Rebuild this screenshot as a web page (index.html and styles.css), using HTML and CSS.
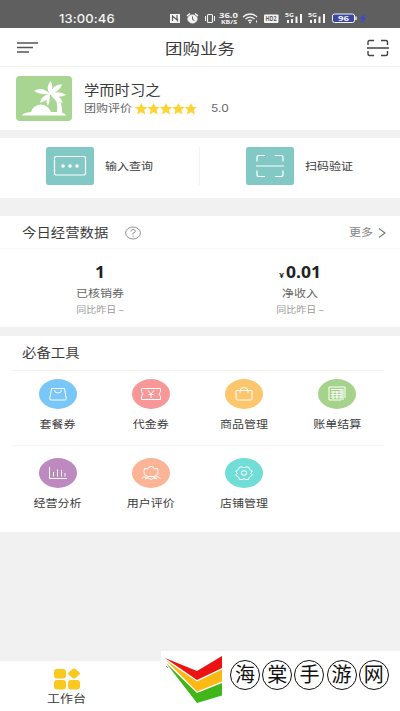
FILE: index.html
```html
<!DOCTYPE html>
<html lang="zh-CN">
<head>
<meta charset="utf-8">
<title>团购业务</title>
<link rel="stylesheet" href="styles.css">
</head>
<body>
<div class="status">
  <span class="clock">13:00:46</span>
  <svg class="status-icons" width="202" height="20" viewBox="168 8 202 20" fill="none" stroke="#f4f4f4">
    <path d="M170 14h10v9h-10z" fill="#f4f4f4" stroke="none"/>
    <path d="M172.500 21v-5l4.500 4v-5M177.500 21.500v-3" stroke="#5f5f5f" stroke-width="1.200"/>
    <ellipse cx="192.500" cy="19" rx="4.600" ry="4" fill="#f4f4f4"/>
    <path d="M187 16l3-2.500M198 16l-3-2.500" stroke-width="1.600"/>
    <path d="M192.500 16.500v3l2 1" stroke="#5f5f5f"/>
    <rect x="207.500" y="14.500" width="5" height="8" rx="1" stroke-width="1.200"/>
    <path d="M205.500 16v5M214.500 16v5"/>
    <path d="M243 17c4-4 10-4 14 0M245.500 19c3-2.500 6-2.500 9 0M248 21c1.500-1.200 2.500-1.200 4 0" stroke-width="1.300"/>
    <circle cx="250" cy="22.500" r="1" fill="#f4f4f4" stroke="none"/>
    <path d="M256.500 20.500v2"/>
    <rect x="264" y="14.500" width="14.500" height="8.500" rx="1" fill="#f4f4f4" stroke="none"/>
    <path d="M288 23v-3M292 23v-4M296.500 23v-6.500M301 23v-9M311 23v-3M315 23v-4M319.500 23v-6.500M324 23v-9" stroke-width="2"/>
    <rect x="332.500" y="14" width="22" height="8.500" rx="2" fill="#3948a5"/>
    <path d="M356 16.500v3.500" stroke-width="1.400"/>
    <path d="M364.500 14l-5 5h3l-1.500 4 5.500-5.500h-3z" fill="#3547d8" stroke="none"/>
    <g class="tiny">
      <text x="219" y="17.500" textLength="19" lengthAdjust="spacingAndGlyphs">36.0</text>
      <text x="221" y="24" textLength="16" lengthAdjust="spacingAndGlyphs" class="unit">KB/S</text>
      <text x="285" y="17" textLength="9" lengthAdjust="spacingAndGlyphs" class="sm">5G</text>
      <text x="308" y="17" textLength="9" lengthAdjust="spacingAndGlyphs" class="sm">5G</text>
      <text x="338" y="21" textLength="11" lengthAdjust="spacingAndGlyphs">96</text>
      <text x="265.500" y="21.200" textLength="11" lengthAdjust="spacingAndGlyphs" class="dark">HD2</text>
    </g>
  </svg>
</div>
<header class="header">
  <svg width="22" height="13" viewBox="0 0 22 13" stroke="#555" stroke-width="1.500"><path d="M0 2h21M0 6.500h16M0 11h12"/></svg>
  <h1 class="t">团购业务</h1>
  <svg width="22" height="18" viewBox="0 0 22 18" fill="none" stroke="#444" stroke-width="1.400"><path d="M1 6V3q0-1.500 1.500-1.500H7M14 1.500h5q1.500 0 1.500 1.500v3M1 12v3q0 1.500 1.500 1.500H7M14 16.500h5q1.500 0 1.500-1.500v-3M0 9h22"/></svg>
</header>
<section class="shop">
  <svg class="logo" width="56" height="45" viewBox="0 0 56 45"><rect width="56" height="45" rx="4" fill="#a9d593"/><g fill="#fff"><path d="M6 39.500q1-3 9-3.500 2-7 10-7.500 6 .5 9 5.500l1 2h8q6 .5 7 3.500z"/><path d="M34 17q9 7 7 20h5q1-14-11-21z"/><path d="M34 18q-5-6 .5-13 4 6-.5 13zM34 18q-9 1-16-3 8-5 16 3zM34 18q-3 8-10 8.500 1-7 10-8.500zM34 18q0 7-2 12-4-6 2-12zM34 18q2-9 12-10-2 8-12 10zM34 18q10-4 16 1-8 4-16-1zM34 18q10 0 13 9-8-1-13-9z"/></g></svg>
  <div class="shop-info">
    <div class="shop-name t">学而时习之</div>
    <div class="rating"><span class="t">团购评价</span>
      <svg width="62" height="12" viewBox="0 0 62 12" fill="#fdd338"><defs><path id="star" d="M6.200 0l1.900 3.700 4.300.4-3.200 3 1 4.400-4-2.200-4 2.200 1-4.400L0 4.100l4.300-.4z"/></defs><use href="#star"/><use href="#star" x="12.400"/><use href="#star" x="24.800"/><use href="#star" x="37.200"/><use href="#star" x="49.600"/></svg>
      <span class="score t">5.0</span></div>
  </div>
</section>
<section class="verify">
  <div class="verify-item">
    <svg width="48" height="38" viewBox="0 0 48 38"><rect width="48" height="38" rx="2.500" fill="#82c9c6"/><rect x="8.500" y="9.500" width="31" height="18.500" rx="1.500" fill="none" stroke="#fff" stroke-width="1.200"/><g fill="#fff"><circle cx="17" cy="19" r="1.800"/><circle cx="24" cy="19" r="1.800"/><circle cx="31" cy="19" r="1.800"/></g></svg>
    <span class="t">输入查询</span>
  </div>
  <div class="verify-item">
    <svg width="48" height="38" viewBox="0 0 48 38"><rect width="48" height="38" rx="2.500" fill="#82c9c6"/><path d="M11 14.500v-4q0-2 2-2h6M29 8.500h6q2 0 2 2v4M11 23.500v4q0 2 2 2h6M29 29.500h6q2 0 2-2v-4M10 19h28" fill="none" stroke="#fff" stroke-width="1.200"/></svg>
    <span class="t">扫码验证</span>
  </div>
</section>
<section class="data">
  <div class="data-head">
    <h2 class="t">今日经营数据</h2>
    <svg width="16" height="14" viewBox="0 0 16 14" fill="none" stroke="#858585" stroke-width=".9"><ellipse cx="8" cy="7" rx="7.400" ry="6"/><path d="M5.800 5.500q0-2 2.300-2t2.300 1.700Q10.400 6.500 8 7.200v1.300M8 9.700v1"/></svg>
    <span class="more t">更多</span>
    <svg width="8" height="12" viewBox="0 0 8 12" fill="none" stroke="#777" stroke-width="1.100"><path d="M1 1.500l6 4.500-6 4.500"/></svg>
  </div>
  <div class="stats">
    <div class="stat"><b class="t">1</b><span class="label t">已核销券</span><span class="compare t">同比昨日 –</span></div>
    <div class="stat"><b class="t"><small>¥</small>0.01</b><span class="label t">净收入</span><span class="compare t">同比昨日 –</span></div>
  </div>
</section>
<section class="tools">
  <h2 class="t">必备工具</h2>
  <div class="tool-row">
    <div class="tool"><svg viewBox="0 0 38 30"><ellipse cx="19" cy="15" rx="19" ry="15" fill="#78c7f8"/><path d="M12.500 9.500h13l1.700 10q.2 1.500-1.200 1.500H12q-1.400 0-1.200-1.500zM15.500 11q0 3 3.500 3t3.500-3"/></svg><span class="t">套餐券</span></div>
    <div class="tool"><svg viewBox="0 0 38 30"><ellipse cx="19" cy="15" rx="19" ry="15" fill="#f89798"/><path d="M9.500 9.500h19v3q-3 2.500 0 5v3h-19v-3q3-2.500 0-5z"/><path d="M16 11.500l3 3.500 3-3.500M19 15v4M16.500 15.500h5" stroke-width="1.300"/></svg><span class="t">代金券</span></div>
    <div class="tool"><svg viewBox="0 0 38 30"><ellipse cx="19" cy="15" rx="19" ry="15" fill="#fcc66c"/><path d="M11 11.500h16v8q0 1.500-1.500 1.500h-13q-1.500 0-1.500-1.500zM15 14v-2q0-3.500 4-3.500t4 3.500v2"/></svg><span class="t">商品管理</span></div>
    <div class="tool"><svg viewBox="0 0 38 30"><ellipse cx="19" cy="15" rx="19" ry="15" fill="#a5d38c"/><path d="M11 21V8h16v11M11 21h12V11M13 10.500h11.500M13 13h11.500M13 15.500h11.500M13 18h11.500M15 12v8M19 12v8M25 10v11"/></svg><span class="t">账单结算</span></div>
  </div>
  <div class="tool-row second">
    <div class="tool"><svg viewBox="0 0 38 30"><ellipse cx="19" cy="15" rx="19" ry="15" fill="#bd89be"/><path d="M10.500 9v11.500H28M14.500 18.500V14M18.500 18.500v-7M22.500 18.500V12M26 18.500V15"/></svg><span class="t">经营分析</span></div>
    <div class="tool"><svg viewBox="0 0 38 30"><ellipse cx="19" cy="15" rx="19" ry="15" fill="#fbb596"/><path d="M12.500 10.500l3 .5q1-2.500 3.500-2.500T22.500 11l3-.5q2 6-3 8h-7q-5-2-3-8zM9.500 20.500q2-2.500 5-1.500l4.500 2.500 4.500-2.500q3-1 5 1.500M13 21l3-1M25 21l-3-1"/></svg><span class="t">用户评价</span></div>
    <div class="tool"><svg viewBox="0 0 38 30"><ellipse cx="19" cy="15" rx="19" ry="15" fill="#70ddd7"/><path d="M14.500 9h2.500q2 1.500 4 0h2.500l1 2.500 2.500 1.500v1l-1.500 1 1.500 1.500v1l-2.500 1.500-1 2.500H21q-2-1.500-4 0h-2.500l-1-2.500L11 17.500v-1l1.500-1.500L11 14v-1l2.500-1.500z"/><ellipse cx="19" cy="15" rx="2.800" ry="2.300" class="stroke"/></svg><span class="t">店铺管理</span></div>
  </div>
</section>
<nav class="nav">
  <div class="nav-item">
    <svg width="28" height="22" viewBox="0 0 28 22" fill="#f9c91f"><rect x="1" y="1" width="12" height="9.500" rx="3"/><path d="M19.500 1q1.500-1.200 3 0l4 3.500q1 1 0 2l-4 3.500q-1.500 1.200-3 0l-4-3.500q-1-1 0-2z"/><rect x="1" y="12" width="12" height="9.500" rx="3"/><rect x="15" y="12" width="12" height="9.500" rx="3"/></svg>
    <span class="t">工作台</span>
  </div>
</nav>
<aside class="brand">
  <svg width="61" height="60" viewBox="161 651 61 60"><path fill="#ec1212" d="M165 658l32 13 25-15v12l-25 12z"/><path fill="#fdb913" d="M166 660.500l31 21 25-12v12l-25 10z"/><path fill="#41b619" d="M166 663l31 30 25-10v12.500l-25 7.500z"/><path d="M166 666l2 2" stroke="#777" stroke-width=".8"/></svg>
  <div class="brand-name"><span>海</span><span>棠</span><span>手</span><span>游</span><span>网</span></div>
</aside>
</body>
</html>
```
FILE: styles.css
```css
* { box-sizing: border-box; }
body {
  margin: 0;
  height: 711px;
  overflow: hidden;
  display: flex;
  flex-direction: column;
  background: #f1f1f1;
  color: #3c3c3c;
  font: 12px/16px "Noto Sans", "Noto Sans CJK SC", sans-serif;
}
svg { display: block; flex: none; }
h1, h2 { margin: 0; font-weight: 400; }
/* wide, flattened lettering */
.t { display: block; transform: scaleY(.87); white-space: nowrap; }

.status { height: 28px; flex: none; display: flex; align-items: center; padding: 8px 0 0 59px; background: #5f5f5f; }
.clock { width: 109px; color: #f4f4f4; font: 500 13px/16px Inter, sans-serif; letter-spacing: .1px; transform: scaleY(.9); }
.tiny { fill: #f4f4f4; stroke: none; font: 700 7px "Open Sans", sans-serif; }
.tiny .sm { font-size: 6px; }
.tiny .unit { font-size: 5.5px; }
.tiny .dark { fill: #5f5f5f; }

.header { height: 38px; flex: none; display: flex; align-items: center; justify-content: space-between; padding: 1px 11px 0 17px; background: #fff; }
.header h1 { font-size: 17.5px; line-height: 24px; padding-right: 6px; transform: scaleY(.83); }

.shop { height: 63px; flex: none; display: flex; gap: 12px; padding: 9px 16px; margin-top: 1px; background: #fff; }
.shop-info { padding-top: 4px; }
.shop-name { font-size: 15.3px; line-height: 20px; }
.rating { display: flex; align-items: center; margin-top: 1px; color: #666; }
.rating svg { margin-left: 3px; }
.score { margin-left: 14px; font: 12px/16px Inter, sans-serif; }

.verify { height: 60px; flex: none; margin-top: 8px; display: grid; grid-template-columns: 1fr 1fr; align-items: center; background: #fff; }
.verify-item { height: 38px; display: flex; align-items: center; gap: 11px; padding-left: 46px; margin-top: -4px; }
.verify-item .t { padding-top: 2px; }
.verify-item:first-child { border-right: 1px solid #f3f3f3; }

.data { height: 111px; flex: none; margin-top: 18px; background: #fff; }
.data-head { height: 33px; display: flex; align-items: center; padding: 2px 14px 0 22px; border-bottom: 1px solid #fafafa; }
.data-head h2 { font-size: 14.4px; margin-right: 17px; }
.more { margin: 0 5px 0 auto; color: #858585; }
.stats { display: grid; grid-template-columns: 1fr 1fr; padding-top: 13px; }
.stat { display: flex; flex-direction: column; align-items: center; }
.stat b { height: 20px; font-size: 17.5px; line-height: 20px; color: #222; }
.stat small { font-size: 9px; line-height: 1; margin-right: 2px; }
.label { margin-top: 3px; line-height: 17px; color: #666; }
.compare { font-size: 10px; line-height: 16px; color: #999; }

.tools { height: 196px; flex: none; margin-top: 9px; padding: 0 16px 0 11px; background: #fff; }
.tools h2 { height: 34px; padding-left: 11px; font-size: 14.4px; line-height: 34px; }
.tool-row { height: 75px; display: grid; grid-template-columns: repeat(4, 1fr); padding-top: 8px; border-top: 1px solid #f4f2ec; }
.second { padding-top: 12px; border-color: #f6f6f6; }
.tool { display: flex; flex-direction: column; align-items: center; gap: 8px; }
.tool svg { width: 38px; height: 30px; }
.tool path, .stroke { fill: none; stroke: #fff; stroke-width: 1; }

.nav { height: 50px; flex: none; margin-top: auto; padding: 7px 0 0 47px; background: #fff; }
.nav-item { width: 39px; display: flex; flex-direction: column; align-items: center; font-size: 13px; line-height: 18px; }

.brand { position: absolute; right: 0; bottom: 0; width: 239px; height: 60px; display: flex; background: #fff; }
.brand-name { display: flex; gap: 2.2px; padding: 9px 0 0 8px; }
.brand-name span { width: 30px; height: 30px; border: 1.3px solid #111; border-radius: 50%; color: #111; font-size: 20px; line-height: 27px; text-align: center; }
```
